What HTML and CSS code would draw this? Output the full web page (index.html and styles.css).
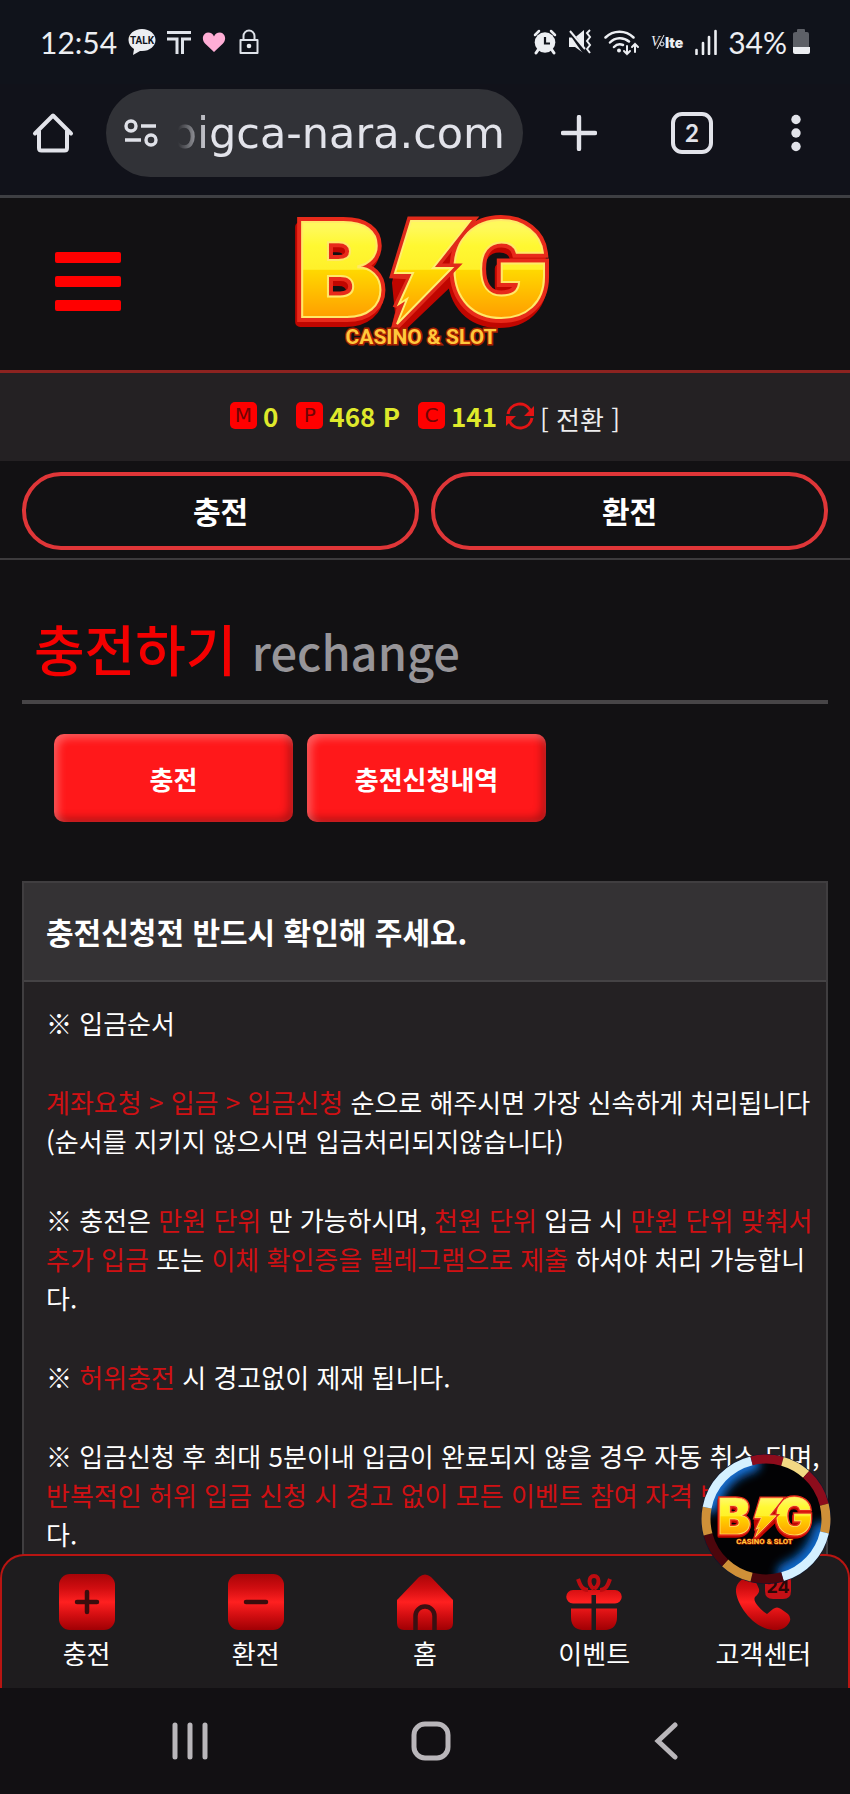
FILE: index.html
```html
<!DOCTYPE html>
<html lang="ko">
<head>
  <meta charset="UTF-8" />
  <meta name="viewport" content="width=device-width, initial-scale=1" />
  <title>충전하기</title>
  <link rel="stylesheet" href="styles.css">
</head>
<body>
  <!-- 공용 로고, 그라데이션 -->
  <svg class="defs" width="0" height="0" aria-hidden="true">
    <defs>
      <linearGradient id="gold" gradientUnits="userSpaceOnUse" x1="0" y1="36" x2="0" y2="128">
        <stop offset="0" stop-color="#fff95c" />
        <stop offset="0.2" stop-color="#fff832" />
        <stop offset="0.46" stop-color="#fff02a" />
        <stop offset="0.47" stop-color="#ffd800" />
        <stop offset="1" stop-color="#ff9c00" />
      </linearGradient>
      <linearGradient id="redIcon" gradientUnits="userSpaceOnUse" x1="0" y1="0" x2="0" y2="56">
        <stop offset="0" stop-color="#a80408" />
        <stop offset="0.25" stop-color="#d00d10" />
        <stop offset="0.5" stop-color="#ff2020" />
        <stop offset="0.75" stop-color="#d00d10" />
        <stop offset="1" stop-color="#a00004" />
      </linearGradient>
      <symbol id="logo" viewBox="14 22 262 138">
        <g class="logo-big">
          <g class="logo-shadow">
            <text x="14" y="131">B</text>
            <text x="168" y="131">G</text>
            <path d="M131 35 194 35 174 82 177 83 115 142 120 122 117 92z" />
          </g>
          <g class="logo-edge">
            <text x="16" y="126">B</text>
            <text x="170" y="126">G</text>
          </g>
          <g class="logo-face">
            <text x="16" y="126">B</text>
            <text x="170" y="126">G</text>
          </g>
          <path class="bolt-edge" d="M131 30 190 30 153 77 172 77 117 133 122 114 119 113 133 84 115 83z" />
          <path class="bolt-face" d="M131 30 190 30 153 77 172 77 117 133 127 108 119 113 133 82 115 82z" />
        </g>
        <text class="logo-sub" x="141" y="153" text-anchor="middle">CASINO &amp; SLOT</text>
      </symbol>
    </defs>
  </svg>

  <div class="statusbar">
    <div class="status-group">
      <span class="clock">12:54</span>
      <svg width="28" height="26" viewBox="0 0 28 26"><path fill="#eceef2" d="M14 0C6 0 .5 5 .5 11c0 4 2.300 7 5.500 9l-1 6 7-4h2c8 0 13.500-5 13.500-11S22 0 14 0z" /><text class="talk" x="14" y="15" text-anchor="middle">TALK</text></svg>
      <svg width="24" height="26" viewBox="0 0 24 26"><path d="M0 3.500H24M0 10H10V25M24 10H15.500V25" fill="none" stroke="#dfe3ea" stroke-width="3" /></svg>
      <svg width="24" height="22" viewBox="0 0 24 22"><path fill="#ffaed6" d="M12 21 3 12.500C-1 8 1 2 6 1.500c3 0 5 1.500 6 4 1-2.500 3-4 6-4 5 .5 7 6.500 3 11z" /></svg>
      <svg width="24" height="26" viewBox="0 0 22 26"><path d="M5.500 11V7a5.500 5.500 0 0 1 11 0v4M2.500 11h17v13h-17z" fill="none" stroke="#dfe3ea" stroke-width="2" stroke-linejoin="round" /><circle cx="11" cy="17" r="2.300" fill="#eceef2" /></svg>
    </div>
    <div class="status-group">
      <svg width="24" height="26" viewBox="0 0 24 26"><g fill="none" stroke="#eceef2" stroke-linecap="round"><path d="M2 6 6 2M22 6 18 2" stroke-width="2.500" /><path d="m5 21-2 3M19 21l2 3" stroke-width="3" /></g><circle cx="12" cy="13.500" r="10.300" fill="#eceef2" /><path d="M12 8v6.500h5" fill="none" stroke="#11141c" stroke-width="2.200" /></svg>
      <svg width="25" height="26" viewBox="0 0 25 26"><path d="M1 8.500h6l9-7.500v23.500L7 18H1z" fill="#eceef2" /><path d="M1 1 17 24" stroke="#11141c" stroke-width="4" /><path d="M2 2 17 20" stroke="#eceef2" stroke-width="2" /><path d="m22 1-3 3 3 4-3 4 3 4-3 4 3 4" fill="none" stroke="#eceef2" stroke-width="2" /></svg>
      <svg width="36" height="28" viewBox="0 0 36 28"><g fill="none" stroke="#eceef2" stroke-width="2.500" stroke-linecap="round"><path d="M1.500 9.500a20 20 0 0 1 28 0M6 14.500a14 14 0 0 1 19-1M10 19a8 8 0 0 1 9-2" /><path d="M23 18v8m-3-3 3 3 3-3M31 24v-8m-3 3 3-3 3 3" stroke-width="2" /></g><circle cx="15" cy="22.500" r="2" fill="#eceef2" /></svg>
      <svg width="33" height="20" viewBox="0 0 33 20"><text class="vo" x="0" y="14">V</text><path d="M13 3 6 17" stroke="#eceef2" stroke-width="1" /><circle cx="11" cy="12" r="2" fill="none" stroke="#eceef2" /><text class="lte" x="14" y="16">lte</text></svg>
      <svg width="22" height="26" viewBox="0 0 22 26"><path d="M1.500 25v-4M8 25V14M14 25V8M20.500 25V2" stroke="#eceef2" stroke-width="2.600" stroke-linecap="round" /></svg>
      <span class="power">34%
        <svg width="18" height="26" viewBox="0 0 18 26"><path fill="#5d6067" d="M4 3h1V1q0-1 1-1h6q1 0 1 1v2h2q2 0 2 2v14H1V5q0-2 3-2z" /><path fill="#eceef2" d="M1 18h17v5q0 2-2 2H3q-2 0-2-2z" /></svg>
      </span>
    </div>
  </div>

  <div class="toolbar">
    <button class="tool" aria-label="홈">
      <svg width="42" height="42" viewBox="0 0 42 42"><path d="M3 21.500 21 3.500 39 21.500M7 19V36q0 2.500 2.500 2.500h23q2.500 0 2.500-2.500V19" fill="none" stroke="#e2e3ea" stroke-width="4" stroke-linejoin="round" stroke-linecap="round" /></svg>
    </button>
    <div class="address">
      <svg width="34" height="28" viewBox="0 0 34 28"><g fill="none" stroke="#dfe1e8" stroke-width="3.400"><circle cx="7" cy="7" r="5" /><circle cx="27" cy="21" r="5" /><path d="M17 7h15M1 21h16" /></g></svg>
      <input class="url" type="text" aria-label="주소" dir="rtl" value="bigca-nara.com" />
    </div>
    <div class="tools">
      <button class="tool" aria-label="새 탭"><svg width="36" height="36" viewBox="0 0 36 36"><path d="M18 2v32M2 18h32" stroke="#e2e3ea" stroke-width="4.400" stroke-linecap="round" /></svg></button>
      <button class="tool tabs-count" aria-label="탭 2개">2</button>
      <button class="tool" aria-label="메뉴"><svg width="18" height="38" viewBox="0 0 18 38"><g fill="#e2e3ea"><circle cx="9" cy="5.500" r="4.700" /><circle cx="9" cy="19" r="4.700" /><circle cx="9" cy="32.500" r="4.700" /></g></svg></button>
    </div>
  </div>

  <main class="page">
    <header class="header">
      <button class="menu" aria-label="전체 메뉴"><span></span><span></span><span></span></button>
      <a class="logo" href="#" aria-label="BIG CASINO &amp; SLOT"><svg width="262" height="138"><use href="#logo" /></svg></a>
    </header>

    <div class="balance">
      <span class="item"><i class="badge">M</i><b>0</b></span>
      <span class="item"><i class="badge">P</i><b>468 P</b></span>
      <span class="item"><i class="badge">C</i><b>141</b>
        <button class="refresh" aria-label="새로고침"><svg width="28" height="28" viewBox="0 0 28 28"><g fill="none" stroke="#e31414" stroke-width="3"><path d="M2 12A12 12 0 0 1 24.500 8.500M26 16A12 12 0 0 1 3.500 19.500" /></g><path fill="#e31414" d="M28 4V14H18zM0 24V14H10z" /></svg></button>
        <a class="convert" href="#">[ 전환 ]</a>
      </span>
    </div>

    <div class="quick">
      <a href="#">충전</a>
      <a href="#">환전</a>
    </div>

    <section class="content">
      <h1 class="title">충전하기 <small>rechange</small></h1>
      <div class="subtabs">
        <button>충전</button>
        <button>충전신청내역</button>
      </div>

      <div class="notice">
        <h2>충전신청전 반드시 확인해 주세요.</h2>
        <div class="notice-body">
          <p>※ 입금순서</p>
          <p><em>계좌요청 &gt; 입금 &gt; 입금신청</em> 순으로 해주시면 가장 신속하게 처리됩니다<br>(순서를 지키지 않으시면 입금처리되지않습니다)</p>
          <p>※ 충전은 <em>만원 단위</em> 만 가능하시며, <em>천원 단위</em> 입금 시 <em>만원 단위 맞춰서<br>추가 입금</em> 또는 <em>이체 확인증을 텔레그램으로 제출</em> 하셔야 처리 가능합니<br>다.</p>
          <p>※ <em>허위충전</em> 시 경고없이 제재 됩니다.</p>
          <p>※ 입금신청 후 최대 5분이내 입금이 완료되지 않을 경우 자동 취소 되며,<br><em>반복적인 허위 입금 신청 시 경고 없이 모든 이벤트 참여 자격 박탈됩니</em><br>다.</p>
        </div>
      </div>
    </section>
  </main>

  <nav class="tabbar">
    <a href="#"><svg width="56" height="56" viewBox="0 0 56 56"><rect width="56" height="56" rx="11" fill="url(#redIcon)" /><path d="M28 18v20M18 28h20" stroke="#3a0d0d" stroke-width="4.500" stroke-linecap="round" /></svg>충전</a>
    <a href="#"><svg width="56" height="56" viewBox="0 0 56 56"><rect width="56" height="56" rx="11" fill="url(#redIcon)" /><path d="M18 28h20" stroke="#3a0d0d" stroke-width="4.500" stroke-linecap="round" /></svg>환전</a>
    <a href="#"><svg width="56" height="56" viewBox="0 0 56 56"><path fill="url(#redIcon)" d="M0 26 22 3q6-5 12 0l22 23v23q0 7-7 7H7q-7 0-7-7z" /><path d="M18.500 56V42a9.500 9.500 0 0 1 19 0v14" fill="none" stroke="#3a1012" stroke-width="4.500" /></svg>홈</a>
    <a href="#"><svg width="56" height="56" viewBox="0 0 56 56"><g fill="url(#redIcon)"><path d="M7 16h18.500v13.500H7a6.700 6.700 0 0 1 0-13.500zM30 16h19a6.700 6.700 0 0 1 0 13.500H30zM5 34.500h20.500V56H16Q5 55 5 43zM30 34.500h21V43q0 12-11 13H30z" /><path d="M25 16h6v5h-6z" /></g><path d="M28 15c-6-4-6-13 0-13s6 9 0 13M22 16c-6 0-8-5-10-11M34 16c6 0 8-5 10-11" fill="none" stroke="#bd0c10" stroke-width="4" /></svg>이벤트</a>
    <a href="#"><svg width="56" height="56" viewBox="0 0 56 56"><path fill="url(#redIcon)" d="M12 3q5-3 8 3l4 9q1 4-4 8-2 3 3 9t9 8l6-5q4-3 8 0l7 5q4 4 1 9-5 8-16 7C17 54 0 28 1 15 2 8 7 5 12 3z" /><path fill="#c41016" d="M38 0h10q8 0 8 8v9q0 8-8 8H38q-8 0-8-8V8q0-8 8-8z" /><text class="twentyfour" x="43" y="19" text-anchor="middle">24</text></svg>고객센터</a>

    <button class="chip" aria-label="BIG CASINO &amp; SLOT">
      <svg width="132" height="132" viewBox="-66 -66 132 132">
        <defs>
          <clipPath id="chipClip"><circle r="62" /></clipPath>
          <filter id="glow" x="-50%" y="-50%" width="200%" height="200%"><feGaussianBlur stdDeviation="5" /></filter>
        </defs>
        <circle r="65" fill="#0b1733" />
        <circle r="62" fill="#020204" />
        <g clip-path="url(#chipClip)">
          <g fill="none" stroke-linecap="round" filter="url(#glow)">
            <path d="M-55 -14A57 57 0 0 1 -14 -55" stroke="#1372d8" stroke-width="16" />
            <path d="M57 14A58 58 0 0 1 22 54" stroke="#0f67c8" stroke-width="22" />
          </g>
        </g>
        <!-- 칩 테두리 조각 -->
        <g class="ring" transform="rotate(-90)">
          <circle class="wine" r="60" pathLength="360" stroke-dasharray="16 344" />
          <circle class="cream" r="60" pathLength="360" stroke-dasharray="26 334" stroke-dashoffset="-16" />
          <circle class="wine" r="60" pathLength="360" stroke-dasharray="34 326" stroke-dashoffset="-42" />
          <circle class="amber" r="60" pathLength="360" stroke-dasharray="27 333" stroke-dashoffset="-76" />
          <circle class="white" r="60" pathLength="360" stroke-dasharray="61 299" stroke-dashoffset="-103" />
          <circle class="dark" r="60" pathLength="360" stroke-dasharray="30 330" stroke-dashoffset="-164" />
          <circle class="amber" r="60" pathLength="360" stroke-dasharray="29 331" stroke-dashoffset="-194" />
          <circle class="dark" r="60" pathLength="360" stroke-dasharray="32 328" stroke-dashoffset="-223" />
          <circle class="amber" r="60" pathLength="360" stroke-dasharray="26 334" stroke-dashoffset="-255" />
          <circle class="white" r="60" pathLength="360" stroke-dasharray="65 295" stroke-dashoffset="-281" />
          <circle class="wine" r="60" pathLength="360" stroke-dasharray="14 346" stroke-dashoffset="-346" />
        </g>
        <use href="#logo" x="-49" y="-24" width="98" height="52" />
      </svg>
    </button>
  </nav>

  <div class="sysnav">
    <button aria-label="최근 앱"><svg width="36" height="38" viewBox="0 0 36 38"><path d="M3 3v32M18 3v32M33 3v32" stroke="#b9b6ba" stroke-width="5" stroke-linecap="round" /></svg></button>
    <button aria-label="홈 화면"><svg width="40" height="40" viewBox="0 0 40 40"><rect x="3" y="3" width="34" height="34" rx="11" fill="none" stroke="#b9b6ba" stroke-width="5" /></svg></button>
    <button aria-label="뒤로"><svg width="24" height="38" viewBox="0 0 24 38"><path d="M21 3 4 19l17 16" fill="none" stroke="#b9b6ba" stroke-width="5" stroke-linecap="round" /></svg></button>
  </div>
</body>
</html>
```

FILE: styles.css
```css
* { box-sizing: border-box; }
body { margin: 0; height: 100vh; display: flex; flex-direction: column; background: #121113; color: #fff; font-family: "Noto Sans CJK KR", "Noto Sans", sans-serif; font-size: 26px; }
button { padding: 0; border: 0; background: none; color: inherit; font-family: inherit; }
a { color: inherit; text-decoration: none; }
svg { display: block; flex: none; }
.defs { position: absolute; }

/* 상태바 */
.statusbar { height: 84px; flex: none; display: flex; align-items: center; justify-content: space-between; padding: 0 40px; background: #10131b; color: #eceef2; font: 30px Lato, sans-serif; }
.status-group { display: flex; align-items: center; gap: 11px; }
.power { display: flex; align-items: center; gap: 5px; }
.talk { font: bold 10px Roboto, sans-serif; fill: #11141c; }
.vo { font: italic 14px "Liberation Serif", serif; fill: #eceef2; }
.lte { font: 900 14px Inter, sans-serif; fill: #eceef2; }

/* 주소창 */
.toolbar { flex: none; display: flex; align-items: center; padding: 5px 45px 18px 32px; background: #11121a; border-bottom: 3px solid #3e3f43; }
.tool { flex: none; display: block; }
.address { flex: 1; min-width: 0; height: 88px; margin: 0 38px 0 32px; padding: 0 18px; display: flex; align-items: center; gap: 20px; border-radius: 44px; background: #313237; }
.url { flex: 1; min-width: 0; height: 64px; padding: 0; border: 0; outline: 0; background: none; color: #e2e3ea; font: 43px "DejaVu Sans", sans-serif; -webkit-mask-image: linear-gradient(to right, transparent, #000 32px); mask-image: linear-gradient(to right, transparent, #000 32px); }
.tools { display: flex; align-items: center; gap: 74px; }
.tabs-count { width: 42px; height: 42px; border: 4px solid #e2e3ea; border-radius: 11px; color: #e2e3ea; font: bold 24px/32px Lato, sans-serif; }

.page { flex: 1; min-height: 0; overflow: hidden; }

/* 헤더 */
.header { height: 175px; display: grid; grid-template-columns: 1fr auto 1fr; align-items: center; padding: 0 55px 5px; border-bottom: 3px solid #8c2320; }
.menu { width: 66px; display: grid; gap: 13px; }
.menu span { height: 11px; border-radius: 2px; background: #f00; }
.logo-big text { font: 900 131px Inter, sans-serif; }
.logo-shadow { fill: #c00600; stroke: #c00600; stroke-width: 10px; stroke-linejoin: round; }
.logo-edge { fill: #a80000; stroke: #e82a1a; stroke-width: 10px; }
.logo-face { fill: url(#gold); stroke: #ffe968; stroke-width: 2px; }
.bolt-edge { fill: #e02a1a; stroke: #e02a1a; stroke-width: 9px; }
.bolt-face { fill: url(#gold); stroke: #ffef70; stroke-width: 2px; }
.logo-sub { font: bold 21px Roboto, sans-serif; fill: #ffc83c; stroke: #a82000; stroke-width: 3px; paint-order: stroke; }

/* 보유금 */
.balance { height: 88px; display: flex; align-items: center; justify-content: center; gap: 18px; padding-bottom: 3px; background: #242123; }
.item { display: flex; align-items: center; gap: 6px; }
.item b { color: #dfe92b; font-size: 26px; }
.badge { width: 27px; height: 27px; border-radius: 5px; background: #f00; color: #6e0505; text-align: center; font: 20px/27px "DejaVu Sans", sans-serif; }
.refresh { margin-left: 3px; }
.convert { padding-top: 6px; color: #eee; }

/* 충전 / 환전 */
.quick { display: flex; gap: 12px; padding: 11px 22px 8px; border-bottom: 2px solid #3d3b3d; }
.quick a { flex: 1; height: 78px; border: 4px solid #df3638; border-radius: 39px; text-align: center; font-size: 30px; font-weight: bold; line-height: 68px; }

.content { padding: 0 22px; }
.title { margin: 38px 0 30px; padding-left: 12px; border-bottom: 4px solid #474547; color: #f40000; font-size: 55px; font-weight: 500; line-height: 99px; }
.title small { color: #979599; font-size: 47px; font-weight: 500; }
.subtabs { display: flex; gap: 14px; padding-left: 32px; margin-bottom: 59px; }
.subtabs button { width: 239px; height: 88px; border-radius: 10px; background: #ff181a; box-shadow: inset 4px 4px 8px rgba(255, 255, 255, .3), inset -4px -4px 8px rgba(0, 0, 0, .3); font-size: 26px; font-weight: 700; }

/* 안내문 */
.notice { border: 2px solid #403e40; background: #242123; }
.notice h2 { margin: 0; padding: 0 22px; background: #343234; border-bottom: 2px solid #454345; font-size: 30px; font-weight: 700; line-height: 97px; }
.notice-body { padding: 21px 0 21px 22px; line-height: 39px; white-space: nowrap; }
.notice p { margin: 0 0 40px; }
.notice em { color: #d01013; font-style: normal; }

/* 하단 메뉴 */
.tabbar { position: relative; flex: none; height: 134px; margin-top: -24px; display: grid; grid-template-columns: repeat(5, 1fr); padding-top: 18px; border: 2px solid #b81512; border-bottom: 0; border-radius: 24px 24px 0 0; background: #1e1c1e; }
.tabbar a { display: flex; flex-direction: column; align-items: center; gap: 3px; line-height: 39px; }
.twentyfour { font: bold 18px Inter, sans-serif; fill: #2a0808; }
.chip { position: absolute; top: -103px; right: 16px; border-radius: 50%; }
.ring { fill: none; stroke-width: 9px; }
.wine { stroke: #8d0c1c; }
.dark { stroke: #4c060c; }
.cream { stroke: #f3d984; }
.amber { stroke: #cf9038; }
.white { stroke: #d4f0ff; }

.sysnav { flex: none; height: 106px; display: flex; align-items: center; justify-content: space-between; padding: 0 172px; background: #121013; }
```
